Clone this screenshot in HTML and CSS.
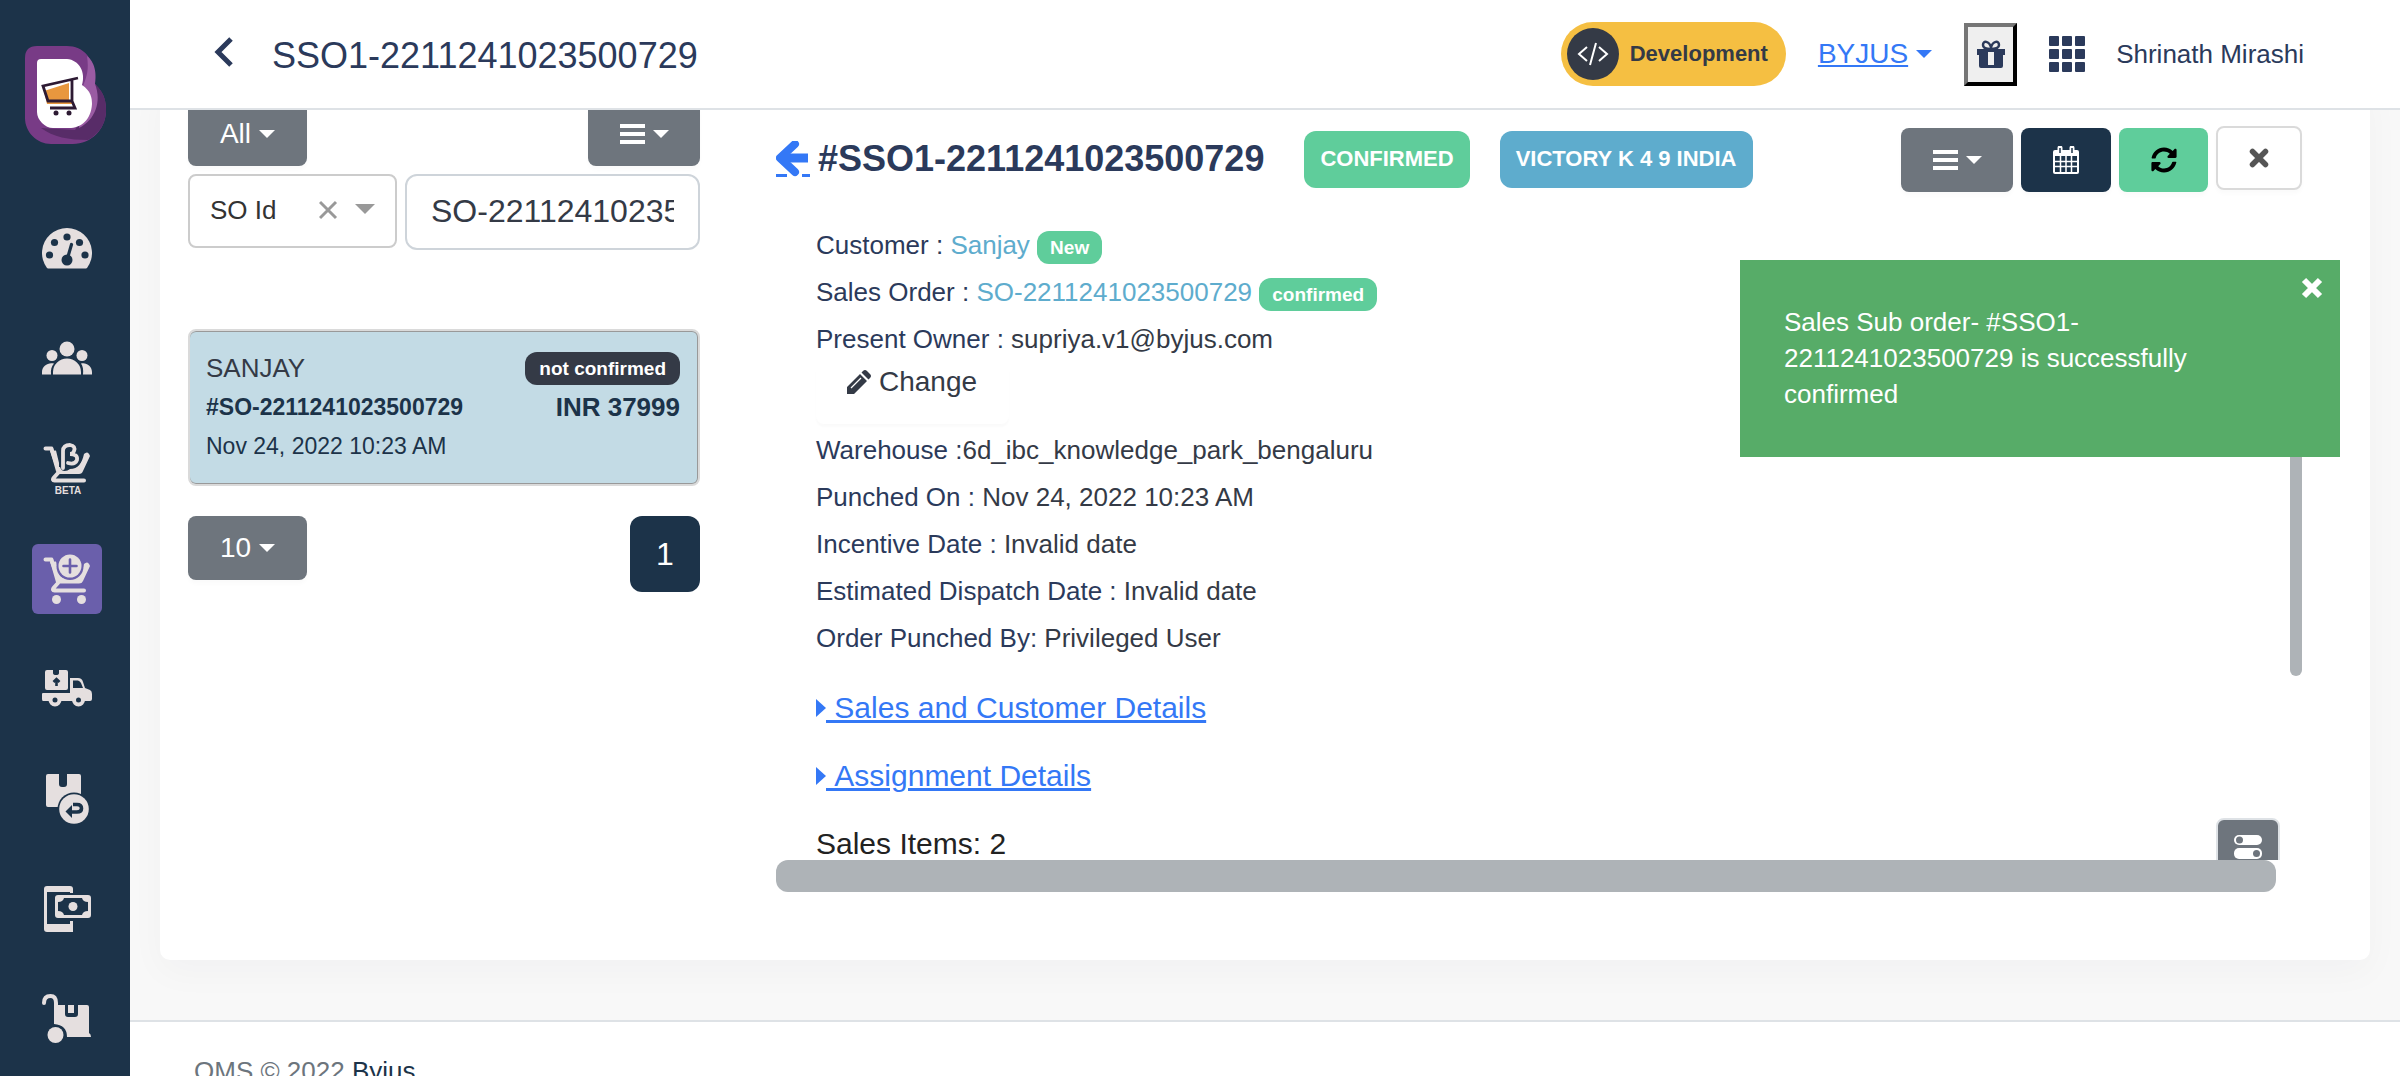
FILE: index.html
```html
<!DOCTYPE html>
<html lang="en">
<head>
<meta charset="utf-8">
<title>OMS - SSO1-2211241023500729</title>
<link rel="stylesheet" href="styles.css">
</head>
<body>
<div class="shell">
  <aside class="sidebar">
    <a class="logo" href="#" aria-label="Home">
      <svg width="82" height="98" viewBox="0 0 82 98">
        <path d="M12 0H42C58 0 71 12 70 38C80 48 81 56 81 66C80 84 66 98 48 98H26C12 98 0 86 0 72V12Q0 0 12 0Z" fill="#783b86"/>
        <path d="M70 38C80 47 81 56 81 66C80 80 73 88 63 94C44 94 28 91 16 82L50 84L66 60Z" fill="#582c68"/>
        <path d="M62 10C72 18 71 32 70 38C77 56 70 74 54 82L58 40C62 30 64 24 62 10Z" fill="#9a5ba3"/>
        <path d="M16 13H42C54 14 61 26 57 39C66 45 67 52 67 58C66 74 56 82 44 82H28C20 82 12 74 12 66V17Q12 13 16 13Z" fill="#fff"/>
        <path d="M19 45L44 37V55H47V58H22Z" fill="#e8973e"/>
        <path d="M53 32L18 40L23 55H47V34M47 55L50 62H25" fill="none" stroke="#2d1a33" stroke-width="2.800"/>
        <circle cx="31" cy="67" r="2.500" fill="#2d1a33"/><circle cx="44" cy="67" r="2.500" fill="#2d1a33"/>
      </svg>
    </a>
    <nav class="menu" aria-label="Main">
      <a class="menu-item" href="#" aria-label="Dashboard">
        <svg width="50" height="50" viewBox="0 0 50 50">
          <path d="M5 44A25 25 0 1 1 45 44Q44 44.500 43 44.500H7Q6 44.500 5 44Z" fill="#e5dfdf"/>
          <g fill="#1c3349"><circle cx="25" cy="13" r="3.600"/><circle cx="12.500" cy="18.500" r="3.600"/><circle cx="37.500" cy="18.500" r="3.600"/><circle cx="7.500" cy="31" r="3.600"/><circle cx="43" cy="31" r="3.600"/><circle cx="25" cy="36" r="5.500"/></g>
          <path d="M25 36L29.500 20.500" stroke="#1c3349" stroke-width="3.200" stroke-linecap="round"/>
        </svg>
      </a>
      <a class="menu-item" href="#" aria-label="Customers">
        <svg width="50" height="50" viewBox="0 0 50 50" fill="#e5dfdf">
          <circle cx="25" cy="15" r="7.500"/><circle cx="10" cy="21.500" r="5.500"/><circle cx="40" cy="21.500" r="5.500"/>
          <path d="M11 40.500V38A14 13.500 0 0 1 39 38V40.500ZM0 40.500V38C0 32 6 28 12 29.500C9.500 32 8.500 36 9 40.500ZM50 40.500V38C50 32 44 28 39 29.500C41 32 41.500 36 41 40.500Z"/>
        </svg>
      </a>
      <a class="menu-item" href="#" aria-label="Sales orders beta">
        <svg width="50" height="52" viewBox="0 0 50 52">
          <path d="M3.500 5.500H9.500L16 28M42 37.500H12.500Q10 37.500 11.500 35L16 30" fill="none" stroke="#e5dfdf" stroke-width="4" stroke-linecap="round" stroke-linejoin="round"/>
          <path d="M8 8L14 7.500L18 24C20 30 25 28 28 26C36 26 40 20 42 11Q46 7 48 13L41 28Q40 31 37 31H16Z" fill="#e5dfdf"/>
          <path d="M21 24V8Q21 2 28 2Q34 3 32 8Q31 11 28 11Q36 11 35 17Q33 22 26 20" fill="none" stroke="#1c3349" stroke-width="8"/>
          <path d="M21 25V8Q21 2 28 2Q34 3 32 8Q31 11 28 11Q36 11 35 17Q33 22 26 20" fill="none" stroke="#e5dfdf" stroke-width="3.800" stroke-linecap="round"/>
          <text x="26" y="51" class="beta-label">BETA</text>
        </svg>
      </a>
      <a class="menu-item active" href="#" aria-label="Sales sub orders">
        <svg width="50" height="50" viewBox="0 0 50 50">
          <path d="M3.500 5.500H9.500L16 28M42 36.500H12.500Q10 36.500 11.500 34L16 29" fill="none" stroke="#e5dfdf" stroke-width="4" stroke-linecap="round" stroke-linejoin="round"/>
          <path d="M8 8L14 7.500L17 20C20 27 38 28 42 10Q46 6 48 12L41 27Q40 29.500 37 29.500H16Z" fill="#e5dfdf"/>
          <circle cx="28" cy="12.500" r="13.500" fill="#6a5fab"/><circle cx="28" cy="12" r="11.500" fill="#e5dfdf"/>
          <path d="M28 5.500V18.500M21.500 12H34.500" stroke="#6a5fab" stroke-width="2.600" stroke-linecap="round"/>
          <circle cx="14.500" cy="45.500" r="4.500" fill="#e5dfdf"/><circle cx="39.500" cy="45.500" r="4.500" fill="#e5dfdf"/>
        </svg>
      </a>
      <a class="menu-item" href="#" aria-label="Shipments">
        <svg width="50" height="50" viewBox="0 0 50 50">
          <path d="M5 6H11V9Q11 11 14 11Q17 11 17 9V6H24Q26 6 26 8V24Q26 26 24 26H5Q3 26 3 24V8Q3 6 5 6ZM0 30Q0 29 1 29H28V14H36Q40 14 41 18L43 24L48 26Q50 27 50 30V35Q50 37 48 37H1Q0 37 0 35Z" fill="#e5dfdf"/>
          <path d="M31 16.500H36Q38 17 39 19L41 24H31Z" fill="#1c3349"/>
          <path d="M14.500 22V16M11.500 18L14.500 15L17.500 18" fill="none" stroke="#1c3349" stroke-width="2.600"/>
          <g fill="#1c3349" stroke="#e5dfdf" stroke-width="4"><circle cx="13" cy="36" r="4.500"/><circle cx="36.500" cy="36" r="4.500"/></g>
        </svg>
      </a>
      <a class="menu-item" href="#" aria-label="Returns">
        <svg width="50" height="50" viewBox="0 0 50 50">
          <path d="M6 0H17V10Q17 13 20 13H22Q25 13 25 10V0H37Q39 0 39 2V33H6Q4 33 4 31V2Q4 0 6 0Z" fill="#e5dfdf"/>
          <circle cx="32" cy="35" r="16.500" fill="#1c3349"/><circle cx="32" cy="35" r="14.800" fill="#e5dfdf"/>
          <path d="M31 30.500H35Q39.500 30.500 39.500 34.500Q39.500 38 35 38H29" fill="none" stroke="#1c3349" stroke-width="3.600"/><path d="M23.500 37.500L30 31V44Z" fill="#1c3349"/>
        </svg>
      </a>
      <a class="menu-item" href="#" aria-label="Payments">
        <svg width="50" height="50" viewBox="0 0 50 50">
          <path d="M5 2H28Q31 2 31 5V48H5Q2 48 2 45V5Q2 2 5 2Z" fill="#e5dfdf"/>
          <path d="M5 8H28V12H31V37H28V40H5Z" fill="#1c3349"/><rect x="12" y="9" width="38" height="26" fill="#1c3349"/>
          <rect x="14.500" y="12.500" width="33" height="20" rx="1.500" fill="none" stroke="#e5dfdf" stroke-width="3"/>
          <path d="M16 14H22Q21 18 16 18ZM46 14H40Q41 18 46 18ZM16 31H22Q21 27 16 27ZM46 31H40Q41 27 46 27Z" fill="#e5dfdf"/>
          <circle cx="31" cy="22.500" r="4.500" fill="#e5dfdf"/>
        </svg>
      </a>
      <a class="menu-item" href="#" aria-label="Inventory">
        <svg width="50" height="50" viewBox="0 0 50 50">
          <path d="M2 9Q2 2 8.500 2Q14 2 14 9V20" fill="none" stroke="#e5dfdf" stroke-width="4" stroke-linecap="round"/>
          <path d="M12 11H23V20Q23 23 26 23H33Q36 23 36 20V11H45Q47 11 47 13V39Q49 40 49 43H25Q25 31 12 30ZM26 11H32V19H26Z" fill="#e5dfdf" fill-rule="evenodd"/>
          <circle cx="13.500" cy="41" r="8" fill="#e5dfdf"/>
        </svg>
      </a>
    </nav>
  </aside>

  <div class="main">
    <header class="topbar">
      <a class="back" href="#" aria-label="Back"><svg width="20" height="30" viewBox="0 0 20 30"><path d="M17 2L4 15L17 28" fill="none" stroke="#2b3a5b" stroke-width="5"/></svg></a>
      <h1 class="page-title">SSO1-2211241023500729</h1>
      <div class="topbar-right">
        <span class="env"><span class="env-icon"><svg width="32" height="26" viewBox="0 0 32 26" fill="none" stroke="#fff" stroke-width="2"><path d="M10 6L2 13L10 20M22 6L30 13L22 20M19 2L13 24"/></svg></span>Development</span>
        <a class="org" href="#"><span class="org-name">BYJUS</span><span class="caret"></span></a>
        <button class="gift" type="button" aria-label="Rewards">
          <svg width="30" height="28" viewBox="0 0 30 28" fill="#2b3a5b"><path d="M1 9H29V15H27V26Q27 28 25 28H5Q3 28 3 26V15H1ZM12 12V25H18V12Z" fill-rule="evenodd"/><path d="M14.500 9C11 9 7 8 7 5C7 0 13 1 15 7C17 1 23 0 23 5C23 8 19 9 14.500 9" fill="none" stroke="#2b3a5b" stroke-width="2.500"/></svg>
        </button>
        <button class="apps" type="button" aria-label="Apps">
          <svg width="36" height="36" viewBox="0 0 36 36" fill="#2b3a5b"><rect width="10" height="10" rx="1"/><rect x="13" width="10" height="10" rx="1"/><rect x="26" width="10" height="10" rx="1"/><rect y="13" width="10" height="10" rx="1"/><rect x="13" y="13" width="10" height="10" rx="1"/><rect x="26" y="13" width="10" height="10" rx="1"/><rect y="26" width="10" height="10" rx="1"/><rect x="13" y="26" width="10" height="10" rx="1"/><rect x="26" y="26" width="10" height="10" rx="1"/></svg>
        </button>
        <span class="user">Shrinath Mirashi</span>
      </div>
    </header>

    <main class="content">
      <section class="card">
        <div class="list">
          <div class="list-row">
            <button class="btn btn-grey btn-drop" type="button">All<span class="caret"></span></button>
            <button class="btn btn-grey btn-bars" type="button" aria-label="List options"><svg width="25" height="20" viewBox="0 0 25 20"><path d="M0 2H25M0 10H25M0 18H25" stroke="#fff" stroke-width="4"/></svg><span class="caret"></span></button>
          </div>
          <div class="filter-row">
            <button class="field-select" type="button" aria-haspopup="listbox">SO Id
              <svg width="56" height="20" viewBox="0 0 56 20"><path d="M1 2L17 18M17 2L1 18" stroke="#999" stroke-width="3"/><path d="M36 4H56L46 14Z" fill="#999"/></svg>
            </button>
            <input class="field-input" type="text" aria-label="SO Id" value="SO-2211241023500729">
          </div>
          <article class="order">
            <div class="order-line"><span class="order-name">SANJAY</span><span class="tag tag-dark">not confirmed</span></div>
            <div class="order-line"><strong class="order-id">#SO-2211241023500729</strong><strong class="order-sum">INR 37999</strong></div>
            <div class="order-line order-date">Nov 24, 2022 10:23 AM</div>
          </article>
          <div class="pager">
            <button class="btn btn-grey btn-drop" type="button">10<span class="caret"></span></button>
            <button class="page-no" type="button">1</button>
          </div>
        </div>

        <div class="detail">
          <div class="detail-head">
            <a class="detail-back" href="#" aria-label="Back to list"><svg width="34" height="36" viewBox="0 0 34 36"><path d="M4 17L19 3M4 17L19 31" fill="none" stroke="#3478f6" stroke-width="8" stroke-linecap="round" stroke-linejoin="round"/><path d="M6 17H32" stroke="#3478f6" stroke-width="9"/><path d="M0 33H11V36H0ZM26 33H34V36H26Z" fill="#3478f6"/></svg></a>
            <h2 class="detail-title">#SSO1-2211241023500729</h2>
            <span class="status status-green">CONFIRMED</span>
            <span class="status status-blue">VICTORY K 4 9 INDIA</span>
            <div class="actions">
              <button class="btn btn-grey btn-bars" type="button" aria-label="Order actions"><svg width="25" height="20" viewBox="0 0 25 20"><path d="M0 2H25M0 10H25M0 18H25" stroke="#fff" stroke-width="4"/></svg><span class="caret"></span></button>
              <button class="btn btn-navy" type="button" aria-label="Calendar"><svg width="26" height="28" viewBox="0 0 26 28"><path d="M2 4H24Q26 4 26 6V26Q26 28 24 28H2Q0 28 0 26V6Q0 4 2 4Z" fill="#fff"/><path d="M7 2V7M19 2V7" stroke="#fff" stroke-width="5" stroke-linecap="round"/><path d="M7 2V7M19 2V7" stroke="#1c3349" stroke-width="1.500"/><path d="M2 10H24V26H2Z" fill="#1c3349"/><path d="M7.500 10V26M13 10V26M18.500 10V26M2 15.500H24M2 20.500H24" stroke="#fff" stroke-width="1.500"/></svg></button>
              <button class="btn btn-green" type="button" aria-label="Refresh"><svg width="26" height="26" viewBox="0 0 512 512"><path d="M370.720 133.280C339.458 104.008 298.888 87.962 255.848 88c-77.458.068-144.328 53.178-162.791 126.850-1.344 5.363-6.122 9.150-11.651 9.150H24.103c-7.498 0-13.194-6.807-11.807-14.176C33.933 94.924 134.813 8 256 8c66.448 0 126.791 26.136 171.315 68.685L463.030 40.970C478.149 25.851 504 36.559 504 57.941V192c0 13.255-10.745 24-24 24H345.941c-21.382 0-32.090-25.851-16.971-40.971l41.750-41.749zM32 296h134.059c21.382 0 32.090 25.851 16.971 40.971l-41.750 41.750c31.262 29.273 71.835 45.319 114.876 45.280 77.418-.070 144.315-53.144 162.787-126.849 1.344-5.363 6.122-9.150 11.651-9.150h57.304c7.498 0 13.194 6.807 11.807 14.176C478.067 417.076 377.187 504 256 504c-66.448 0-126.791-26.136-171.315-68.685L48.970 471.030C33.851 486.149 8 475.441 8 454.059V320c0-13.255 10.745-24 24-24z"/></svg></button>
              <button class="btn btn-white" type="button" aria-label="Close"><svg width="20" height="20" viewBox="0 0 20 20"><path d="M3.500 3.500L16.500 16.500M16.500 3.500L3.500 16.500" stroke="#555" stroke-width="5.500" stroke-linecap="round"/></svg></button>
            </div>
          </div>
          <div class="detail-view">
            <div class="detail-body">
              <p class="info">Customer : <a class="info-link" href="#">Sanjay</a> <span class="tag tag-green">New</span></p>
              <p class="info">Sales Order : <a class="info-link" href="#">SO-2211241023500729</a> <span class="tag tag-green">confirmed</span></p>
              <p class="info">Present Owner : <span class="info-value">supriya.v1@byjus.com</span></p>
              <button class="change" type="button"><svg width="24" height="24" viewBox="0 0 24 24" fill="#343a46"><path d="M0 24V17L13 4L20 11L7 24ZM14.500 2.500L16 1Q18-1 20 1L23 4Q25 6 23 8L21.500 9.500Z"/><path d="M4 18L14 8" stroke="#fff" stroke-width="1.300"/></svg>Change</button>
              <p class="info">Warehouse :<span class="info-value">6d_ibc_knowledge_park_bengaluru</span></p>
              <p class="info">Punched On : <span class="info-value">Nov 24, 2022 10:23 AM</span></p>
              <p class="info">Incentive Date : <span class="info-value">Invalid date</span></p>
              <p class="info">Estimated Dispatch Date : <span class="info-value">Invalid date</span></p>
              <p class="info">Order Punched By: <span class="info-value">Privileged User</span></p>
              <div class="sections">
                <a class="section-link" href="#"><svg width="10" height="18" viewBox="0 0 10 18"><path d="M0 0L10 9L0 18Z" fill="#3478f6"/></svg><span class="section-text">&nbsp;Sales and Customer Details</span></a>
                <a class="section-link" href="#"><svg width="10" height="18" viewBox="0 0 10 18"><path d="M0 0L10 9L0 18Z" fill="#3478f6"/></svg><span class="section-text">&nbsp;Assignment Details</span></a>
                <div class="items-row">
                  <span>Sales Items: 2</span>
                  <button class="toggle" type="button" aria-label="Toggle columns"><svg width="28" height="24" viewBox="0 0 28 24"><rect width="28" height="10" rx="5" fill="#fff"/><rect y="13" width="28" height="11" rx="5" fill="#fff"/><circle cx="5.500" cy="5" r="3.500" fill="#6e757d"/><circle cx="22.500" cy="18.500" r="3.500" fill="#6e757d"/></svg></button>
                </div>
              </div>
            </div>
            <div class="vbar"></div>
          </div>
          <div class="hbar"></div>
        </div>
      </section>
    </main>
    <footer class="footer">OMS © 2022 <a class="footer-link" href="#">Byjus</a></footer>
  </div>

  <div class="toast" role="alert">
    Sales Sub order- #SSO1-2211241023500729 is successfully confirmed
    <button class="toast-close" type="button" aria-label="Dismiss"><svg width="22" height="22" viewBox="0 0 22 22"><path d="M3 3L19 19M19 3L3 19" stroke="#fff" stroke-width="6"/></svg></button>
  </div>
</div>
</body>
</html>
```
FILE: styles.css
```css
* { box-sizing: border-box; }
body {
  margin: 0;
  font-family: "Liberation Sans", Arial, Helvetica, sans-serif;
  font-size: 26px;
  color: #2b3a5b;
  background: #f8f8f8;
}
button, input { font: inherit; color: inherit; margin: 0; }
button { cursor: pointer; }
h1, h2, p { margin: 0; font-weight: 400; }
svg { display: block; flex: none; }
a { text-decoration: none; }

.shell { display: flex; height: 100vh; overflow: hidden; position: relative; }

/* Sidebar */
.sidebar { flex: none; width: 130px; background: #1c3349; display: flex; flex-direction: column; align-items: center; padding-top: 46px; gap: 70px; }
.logo { padding-left: 2px; }
.menu { display: flex; flex-direction: column; gap: 40px; padding-left: 4px; }
.menu-item { display: flex; align-items: center; justify-content: center; width: 70px; height: 70px; border-radius: 6px; }
.menu-item.active { background: #6a5fab; }
.beta-label { font-size: 10px; font-weight: 700; fill: #e5dfdf; text-anchor: middle; }

/* Top bar */
.main { flex: 1; min-width: 0; display: flex; flex-direction: column; }
.topbar { flex: none; position: relative; z-index: 1; height: 110px; padding: 0 96px 0 84px; background: #fff; border-bottom: 2px solid #dee2e6; display: flex; align-items: center; }
.back { padding-bottom: 4px; }
.page-title { margin-left: 38px; font-size: 36px; padding-top: 4px; }
.topbar-right { margin-left: auto; display: flex; align-items: center; }
.env { display: flex; align-items: center; gap: 11px; height: 64px; padding: 0 18px 0 6px; border-radius: 32px; background: #f5bf42; color: #343a46; font-size: 22px; font-weight: 700; }
.env-icon { display: flex; align-items: center; justify-content: center; width: 52px; height: 52px; border-radius: 50%; background: #343a46; }
.org { display: flex; align-items: center; gap: 8px; margin-left: 32px; font-size: 28px; color: #3478f6; }
.org-name { text-decoration: underline; }
.caret { border: 8px solid transparent; border-top-color: currentColor; border-bottom: 0; }
.gift { display: flex; align-items: center; justify-content: center; width: 53px; height: 63px; padding: 0; margin-left: 32px; border: 4px outset #767676; border-right-color: #222; border-bottom-color: #222; background: #efefef; }
.apps { padding: 0; border: 0; background: none; margin-left: 32px; }
.user { margin-left: 31px; }

/* Content card */
.content { flex: none; padding: 0 30px 60px; }
.card { margin-top: -30px; padding: 22px 68px 68px 28px; background: #fff; border-radius: 10px; box-shadow: 0 12px 36px rgba(18, 38, 63, 0.03); display: flex; gap: 76px; }

.btn { display: flex; align-items: center; justify-content: center; gap: 8px; height: 64px; padding: 0; border: 0; border-radius: 8px; color: #fff; font-size: 28px; box-shadow: 0 4px 4px rgba(0, 0, 0, 0.02); }
.btn-grey { background: #6e757d; }
.btn-navy { width: 90px; background: #1c3349; }
.btn-green { width: 89px; background: #5fcd9b; }
.btn-white { align-self: flex-start; width: 86px; background: #fff; border: 2px solid #dadada; }
.btn-drop { width: 119px; }
.btn-bars { width: 112px; }

/* Order list */
.list { flex: none; width: 512px; }
.list-row, .pager { display: flex; justify-content: space-between; align-items: flex-start; }
.filter-row { display: flex; gap: 8px; margin-top: 8px; align-items: flex-start; }
.field-select { flex: none; display: flex; align-items: center; justify-content: space-between; width: 209px; height: 74px; padding: 0 20px 2px; border: 2px solid #ccc; border-radius: 8px; background: #fff; color: #333; }
.field-input { flex: 1; min-width: 0; height: 76px; padding: 0 24px 2px; border: 2px solid #ced4da; border-radius: 12px; background: #fff; color: #343a46; font-size: 32px; }
.order { margin-top: 79px; height: 157px; padding: 18px 18px 0 16px; border: 2px solid #dadada; border-radius: 8px; background: #c3dbe5; box-shadow: inset 0 1px #999, inset 0 -1px #999, inset -1px 0 #999; color: #1c3349; }
.order-line { display: flex; justify-content: space-between; align-items: center; line-height: 39px; }
.order-name { color: #343a46; }
.order-id, .order-date { font-size: 23px; }
.pager { margin-top: 30px; }
.page-no { width: 70px; height: 76px; padding: 0; border: 0; border-radius: 12px; background: #1c3349; color: #fff; font-size: 32px; }

.tag { display: inline-flex; align-items: center; height: 33px; border-radius: 12px; color: #fff; font-size: 19px; font-weight: 700; line-height: 33px; }
.tag-dark { padding: 0 14px; background: #343a46; }
.tag-green { padding: 0 13px; background: #5fcd9b; }

/* Order detail */
.detail { flex: 1; min-width: 0; padding-top: 24px; }
.detail-head { display: flex; align-items: center; height: 66px; }
.detail-title { margin-left: 8px; font-size: 36px; font-weight: 700; }
.status { display: flex; align-items: center; height: 57px; padding: 0 16px; border-radius: 12px; color: #fff; font-size: 22px; font-weight: 700; }
.status-green { margin-left: 40px; background: #5fcd9b; }
.status-blue { margin-left: 30px; background: #5eaccd; }
.actions { display: flex; align-items: flex-end; gap: 8px; height: 66px; margin-left: auto; }

.detail-view { display: flex; height: calc(100vh - 426px); margin-top: 18px; overflow: hidden; }
.detail-body { flex: 1; padding: 12px 10px 0 40px; }
.info { line-height: 47px; }
.info-link { color: #5eaccd; }
.info-value { color: #343a46; }
.change { display: flex; align-items: flex-start; gap: 8px; width: 193px; height: 61px; margin-bottom: 3px; padding: 3px 31px; border: 0; border-radius: 8px; background: #fff; color: #343a46; font-size: 28px; line-height: 32px; box-shadow: 0 3px 2px rgba(0, 0, 0, 0.02); }
.change svg { margin-top: 4px; }
.sections { margin-top: 12px; font-size: 30px; line-height: 68px; color: #222; }
.section-link { display: flex; align-items: center; color: #3478f6; }
.section-text { text-decoration: underline; }
.items-row { display: flex; justify-content: space-between; align-items: flex-start; }
.toggle { display: flex; justify-content: center; width: 64px; height: 60px; margin-top: 8px; padding: 15px 0 0; border: 2px solid #dee2e6; border-radius: 8px; background: #6e757d; }
.vbar { flex: none; width: 12px; height: 386px; margin-top: 80px; border-radius: 6px; background: #aeb3b7; }
.hbar { height: 32px; margin-right: 26px; border-radius: 12px; background: #aeb3b7; }

.footer { flex: 1 0 auto; padding: 31px 64px; border-top: 2px solid #dee2e6; background: #fff; color: #6c757d; line-height: 36px; }
.footer-link { color: #1c3349; }

/* Notification */
.toast { position: absolute; z-index: 2; top: 260px; right: 60px; width: 600px; padding: 44px 100px 45px 44px; background: #57ac68; color: #fff; line-height: 36px; }
.toast-close { position: absolute; top: 17px; right: 17px; padding: 0; border: 0; background: none; }
```
